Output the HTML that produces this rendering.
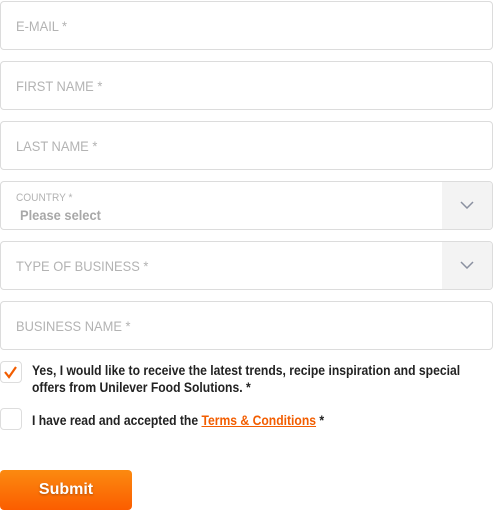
<!DOCTYPE html>
<html><head><style>
body{margin:0;width:494px;height:510px;background:#fff;font-family:"Liberation Sans",sans-serif;position:relative;overflow:hidden}
.f{position:absolute;left:0;width:491px;height:47px;border:1px solid #dcdcdc;border-radius:4px;background:#fff;overflow:hidden}
.ph{position:absolute;left:15px;top:16px;font-size:14px;color:#b3b3b3;white-space:nowrap;transform:scaleX(.92);transform-origin:0 0}
.dd{position:absolute;right:0;top:0;width:50px;height:100%;background:#f3f3f3}
.dd svg{position:absolute;left:18px;top:19px}
.cb{position:absolute;left:0;width:20px;height:20px;border:1px solid #ddd;border-radius:4px;background:#fff}
.t{position:absolute;left:32px;font-size:13.5px;color:#222;line-height:17px;font-weight:bold;white-space:nowrap;transform:scaleX(.9);transform-origin:0 0}
.t a{color:#f25d00;text-decoration:underline}
.btn{position:absolute;left:0;top:470px;width:132px;height:40px;border-radius:4px;background:linear-gradient(#fb8a10,#fb5d00);color:#fff;font-weight:bold;font-size:16px;text-align:center;line-height:40px;text-shadow:0 1px 2px rgba(0,0,0,.3)}
</style></head><body>
<div class="f" style="top:1px"><div class="ph">E-MAIL *</div></div>
<div class="f" style="top:61px"><div class="ph">FIRST NAME *</div></div>
<div class="f" style="top:121px"><div class="ph">LAST NAME *</div></div>
<div class="f" style="top:181px"><div class="ph" style="top:10px;font-size:11px">COUNTRY *</div><div class="ph" style="top:25px;left:19px;font-weight:bold;color:#a8a8a8">Please select</div><div class="dd"><svg width="14" height="8"><path d="M1 1 L7 7 L13 1" fill="none" stroke="#8a90a0" stroke-width="1.5"/></svg></div></div>
<div class="f" style="top:241px"><div class="ph">TYPE OF BUSINESS *</div><div class="dd"><svg width="14" height="8"><path d="M1 1 L7 7 L13 1" fill="none" stroke="#8a90a0" stroke-width="1.5"/></svg></div></div>
<div class="f" style="top:301px"><div class="ph">BUSINESS NAME *</div></div>
<div class="cb" style="top:361px"><svg width="20" height="20"><path d="M4 10 L8 15 L15 5" fill="none" stroke="#f25d00" stroke-width="2.2"/></svg></div>
<div class="t" style="top:362px">Yes, I would like to receive the latest trends, recipe inspiration and special<br>offers from Unilever Food Solutions. *</div>
<div class="cb" style="top:408px"></div>
<div class="t" style="top:412px">I have read and accepted the <a>Terms &amp; Conditions</a> *</div>
<div class="btn">Submit</div>
</body></html>
